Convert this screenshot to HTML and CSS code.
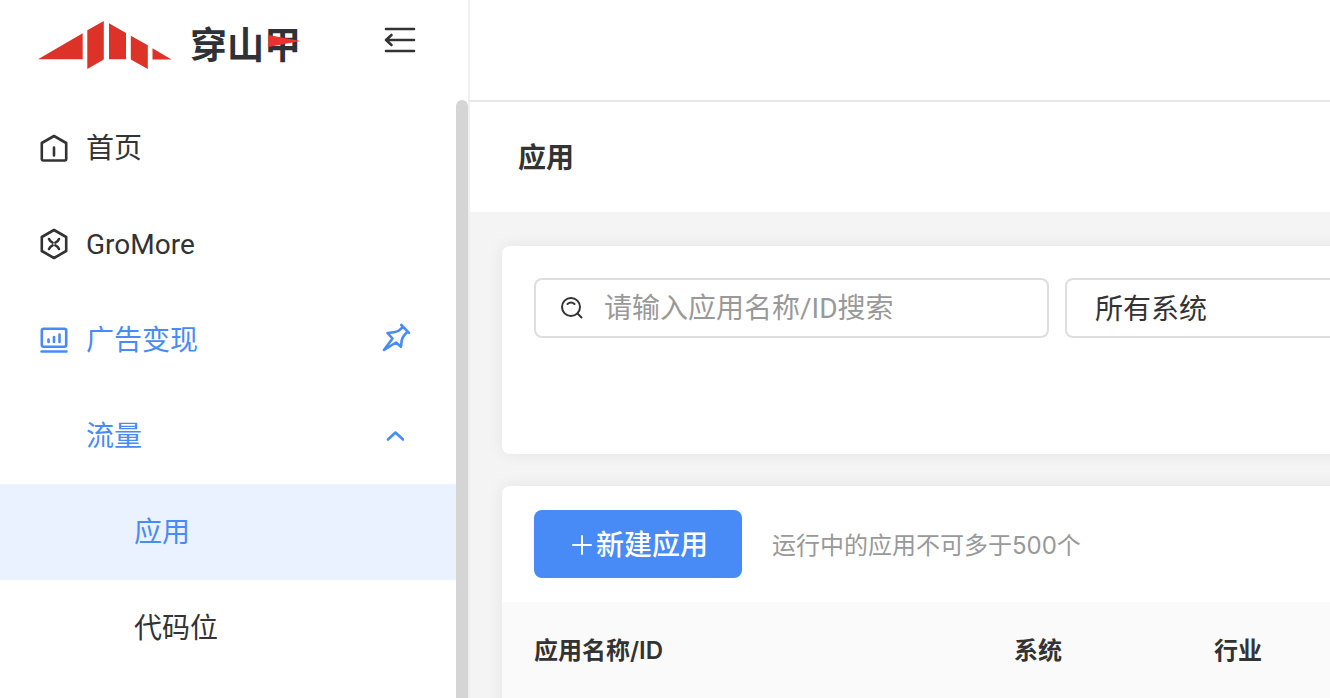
FILE: index.html
```html
<!DOCTYPE html>
<html lang="zh-CN">
<head>
<meta charset="utf-8">
<title>穿山甲 - 应用</title>
<link rel="stylesheet" href="styles.css">
</head>
<body>
<div class="layout">
  <aside class="sidebar">
    <div class="brand">
      <a class="logo" href="#">
        <svg class="logo-mark" viewBox="0 0 134 48" aria-hidden="true">
          <path d="M0 38.3 44.7 12.3V38.3ZM49.3 9.3 65.8 0V38.5L49.3 48ZM71 2.3 88 12V38.3H71ZM92.8 14.7 109.8 24.3V48L92.8 38.5ZM114.5 27.3 133.5 38.5H114.5Z"/>
        </svg>
        <span class="logo-name">穿山甲
          <svg class="logo-flag" viewBox="0 0 32 12" aria-hidden="true"><path d="M0 0 32 6 0 12Z"/></svg>
        </span>
      </a>
      <button class="icon-button" type="button" aria-label="收起菜单">
        <svg class="icon-fold" viewBox="0 0 32 26"><path d="M2 2H30M2 13H30M2 24H30M7.500 8 2 13 7.500 18"/></svg>
      </button>
    </div>
    <div class="menu-area">
      <nav class="menu">
        <a class="menu-item" href="#">
          <svg class="icon" viewBox="0 0 28 32"><path d="M14 4 26.200 11V27a1.500 1.500 0 0 1-1.500 1.500H3.300A1.500 1.500 0 0 1 1.800 27V11ZM14 15.500V23.500"/></svg>
          <span class="menu-text">首页</span>
        </a>
        <a class="menu-item" href="#">
          <svg class="icon" viewBox="0 0 28 32"><path d="M14 2 26.200 9V23L14 30 1.800 23V9Z"/><path d="M9 11Q10 13.500 12.600 14.600M19 11Q18 13.500 15.400 14.600M9 21Q10 18.500 12.600 17.400M19 21Q18 18.500 15.400 17.400"/></svg>
          <span class="menu-text">GroMore</span>
        </a>
        <a class="menu-item is-open" href="#">
          <svg class="icon" viewBox="0 0 28 32"><rect x="1.800" y="4.800" width="24.400" height="18" rx="2"/><path d="M8.500 15.500V18M14 13V18M19.500 10.500V18M1.500 27.500H26.500"/></svg>
          <span class="menu-text">广告变现</span>
          <svg class="icon-pin" viewBox="0 0 30 34"><path d="M19.300 2 27 9.800M20.800 3.800Q17 8.800 12 9.200L5.500 10 10.500 15.500 2 27 14 19.500 19 23.700 19.700 17.500Q20.500 13.500 25.500 8.800"/></svg>
        </a>
        <a class="menu-item is-open level-2" href="#">
          <span class="menu-text">流量</span>
          <svg class="icon-chevron" viewBox="0 0 18 12"><path d="M2 9.500 9.500 2.500 17 9.500"/></svg>
        </a>
        <a class="menu-item is-active level-3" href="#" aria-current="page"><span class="menu-text">应用</span></a>
        <a class="menu-item level-3" href="#"><span class="menu-text">代码位</span></a>
      </nav>
      <div class="scroll-thumb"></div>
    </div>
  </aside>

  <main class="main">
    <header class="topbar"></header>
    <div class="page-title"><h1>应用</h1></div>
    <div class="content">
      <section class="card filters">
        <label class="search">
          <svg class="icon-search" viewBox="0 0 24 24"><circle cx="11" cy="11" r="9"/><path d="M17.500 17.500 21.500 21.500M7.500 8Q11 5 14.500 8"/></svg>
          <input type="text" placeholder="请输入应用名称/ID搜索" aria-label="请输入应用名称/ID搜索">
        </label>
        <select class="select" aria-label="系统">
          <option>所有系统</option>
        </select>
      </section>
      <section class="card list">
        <div class="toolbar">
          <button class="primary" type="button">
            <svg class="icon-plus" viewBox="0 0 20 20"><path d="M1 10H19M10 1V19"/></svg>新建应用
          </button>
          <p class="hint">运行中的应用不可多于500个</p>
        </div>
        <table class="table">
          <colgroup><col class="col-name"><col class="col-system"><col></colgroup>
          <thead>
            <tr><th scope="col">应用名称/ID</th><th scope="col">系统</th><th scope="col">行业</th></tr>
          </thead>
        </table>
      </section>
    </div>
  </main>
</div>
</body>
</html>
```
FILE: styles.css
```css
* { box-sizing: border-box; }

body {
  margin: 0;
  color: #333;
  background: #fff;
  font: 28px/40px Inter, "Noto Sans CJK SC", sans-serif;
}

svg {
  display: block;
  flex: none;
  fill: none;
  stroke: currentColor;
  stroke-width: 2.6;
  stroke-linecap: round;
  stroke-linejoin: round;
}

a { color: inherit; text-decoration: none; }
button, input, select { font: inherit; color: inherit; }

.layout { display: flex; height: 100vh; overflow: hidden; }

/* Sidebar */
.sidebar {
  display: flex;
  flex-direction: column;
  flex: none;
  width: 470px;
  border-right: 2px solid #f0f0f0;
}

.brand {
  display: flex;
  flex: none;
  justify-content: space-between;
  height: 100px;
  padding: 20px 52px 0 38px;
}

.logo { display: flex; align-items: flex-start; gap: 18px; }
.logo-mark { width: 134px; height: 50px; fill: #dc3227; stroke: none; }
.logo-name {
  position: relative;
  font-size: 37px;
  line-height: 52px;
  font-weight: 700;
  color: #2f3136;
}
.logo-flag {
  position: absolute;
  right: 0;
  top: 15px;
  width: 33px;
  height: 12px;
  fill: #ee3030;
  stroke: none;
}

.icon-button {
  align-self: flex-start;
  padding: 7px 0;
  border: 0;
  background: none;
}
.icon-fold { width: 32px; height: 26px; }

.menu-area { display: flex; flex: 1; min-height: 0; overflow: hidden; }
.menu { flex: 1; font-family: Roboto, "Noto Sans CJK SC", sans-serif; }
.scroll-thumb {
  width: 12px;
  height: 800px;
  border-radius: 6px;
  background: #d5d5d5;
}

.menu-item {
  display: flex;
  align-items: center;
  gap: 18px;
  height: 96px;
  padding: 0 44px 0 40px;
}
.menu-text { flex: 1; padding-top: 2px; }
.level-2 { padding: 0 52px 0 86px; }
.level-3 { padding-left: 134px; }
.is-open, .is-active { color: #488bf7; }
.is-active { background: #ebf2ff; }

.icon { width: 28px; height: 32px; }
.icon-pin { width: 30px; height: 34px; }
.icon-chevron { width: 18px; height: 12px; }

/* Main area */
.main {
  display: flex;
  flex-direction: column;
  flex: 1;
  min-width: 0;
  overflow: hidden;
  background: #f4f4f4;
}
.topbar {
  flex: none;
  height: 102px;
  border-bottom: 2px solid #e5e6eb;
  background: #fff;
}
.page-title { padding: 36px 48px 34px; background: #fff; }
.page-title h1 { margin: 0; font-size: 28px; font-weight: 700; }

.content {
  display: flex;
  flex-direction: column;
  gap: 32px;
  min-width: 1300px;
  padding: 34px 32px;
}
.card {
  flex: none;
  overflow: clip;
  border-radius: 8px;
  background: #fff;
  box-shadow: 0 0 16px rgba(0, 0, 0, 0.07);
}

.filters { display: flex; gap: 16px; padding: 32px 32px 116px; }
.search {
  display: flex;
  align-items: center;
  gap: 20px;
  flex: none;
  width: 515px;
  height: 60px;
  padding: 0 24px;
  border: 2px solid #dedede;
  border-radius: 8px;
}
.icon-search { width: 24px; height: 24px; stroke-width: 2; }
.search input {
  flex: 1;
  min-width: 0;
  padding: 2px 0 0;
  border: 0;
  outline: 0;
  background: none;
  font-family: Roboto, "Noto Sans CJK SC", sans-serif;
}
.search input::placeholder { color: #999; opacity: 1; }
.select {
  flex: 1;
  height: 60px;
  padding: 2px 28px 0;
  border: 2px solid #dedede;
  border-radius: 8px;
  background: #fff;
  appearance: none;
}

.list { padding-bottom: 32px; }
.toolbar { display: flex; align-items: center; gap: 30px; padding: 24px 32px; }
.primary {
  display: flex;
  align-items: center;
  justify-content: center;
  gap: 4px;
  width: 208px;
  height: 68px;
  padding: 2px 0 0 4px;
  border: 0;
  border-radius: 8px;
  color: #fff;
  background: #488bf7;
  font-weight: 500;
}
.icon-plus { width: 20px; height: 20px; stroke-width: 2; }
.hint { margin: 0; padding-top: 4px; font-size: 24px; color: #999; }

.table { width: 100%; table-layout: fixed; border-collapse: collapse; }
.col-name { width: 480px; }
.col-system { width: 200px; }
.table th {
  height: 96px;
  padding: 2px 32px 0;
  background: #fafafa;
  font-size: 24px;
  font-weight: 600;
  text-align: left;
}
```
